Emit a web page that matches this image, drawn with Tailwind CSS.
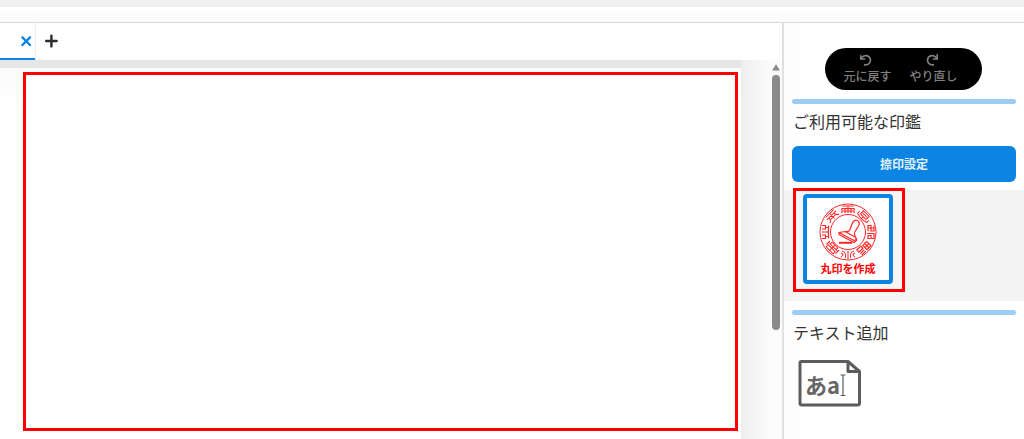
<!DOCTYPE html>
<html lang="ja">
<head>
    <meta charset="UTF-8">
    <meta name="viewport" content="width=device-width, initial-scale=1.0">
    <title>印鑑エディタ</title>
    <script src="https://cdn.jsdelivr.net/npm/@tailwindcss/browser@4"></script>
    <style>
        body {
            font-family: 'Noto Sans CJK JP', 'Noto Sans', sans-serif;
        }
    </style>
</head>
<body class="h-screen flex flex-col overflow-hidden bg-white text-[#333333]">
    <!-- Top bar -->
    <div class="h-[7px] shrink-0 bg-[#f0f0f0]"></div>
    <header class="h-4 shrink-0 bg-gradient-to-b from-white to-[#fafafa] border-b border-[#d9d9d9]"></header>

    <div class="flex flex-1 min-h-0">
        <!-- Editor -->
        <main class="flex flex-col flex-1 min-w-0 border-r-2 border-[#e0e0e0]">
            <!-- Tabs -->
            <nav class="flex h-[37px] shrink-0 bg-white">
                <div class="flex w-9 justify-end border-r border-[#eeeeee]">
                    <button aria-label="タブを閉じる" class="flex w-full items-center justify-end pr-[3px] border-b-2 border-[#0b84e3]">
                        <svg class="size-3" viewBox="0 0 12 12" fill="none" stroke="#0b84e3" stroke-width="2.4" stroke-linecap="round">
                            <path d="M2.4 2.4l7.6 7.6M10 2.4l-7.6 7.6" />
                        </svg>
                    </button>
                </div>
                <button aria-label="タブを追加" class="flex items-center px-2 pb-0.5">
                    <svg class="size-[14px]" viewBox="0 0 14 14" fill="none" stroke="#2b2b2b" stroke-width="2.4" stroke-linecap="round">
                        <path d="M7.4 1.6v10.8M2.2 7h10.4" />
                    </svg>
                </button>
            </nav>

            <!-- Canvas -->
            <div class="flex flex-1 min-h-0 bg-[#e6e6e6]">
                <div class="flex flex-1 min-w-0 pt-2">
                    <section class="flex flex-1 min-w-0 bg-gradient-to-b from-[#fafafa] to-white to-10% pl-[23px] pr-[3px] pt-1 pb-2">
                        <div class="flex-1 border-3 border-[#ff0000] bg-white"></div>
                    </section>
                </div>
                <div class="flex w-[41px] shrink-0 flex-col items-end bg-gradient-to-r from-[#eeeeee] to-[#fbfbfb] to-70% pt-1 pr-[2px]">
                    <svg class="w-2 h-[7px]" viewBox="0 0 8 7" fill="#8a8a8a">
                        <path d="M4 0.3L8 6.6H0z" />
                    </svg>
                    <div class="mt-1 w-2 h-[68%] rounded-full bg-[#8a8a8a]"></div>
                </div>
            </div>
        </main>

        <!-- Sidebar -->
        <aside class="w-60 shrink-0 bg-gradient-to-r from-[#fcfcfc] to-white to-10% pt-[25px]">
            <!-- Undo / redo -->
            <div class="ml-[41px] flex h-[42px] w-[157px] justify-center gap-[18px] rounded-full bg-black pr-1.5 text-xs font-medium text-[#808080]">
                <button class="flex flex-col items-center pt-1">
                    <svg class="size-4" viewBox="0 0 16 16" fill="none" stroke="currentColor" stroke-width="1.7">
                        <path d="M5 12.6A4.7 4.7 0 1 0 2.4 6.6" />
                        <path d="M1.8 3.2v3.8h4.4" />
                    </svg>
                    <span>元に戻す</span>
                </button>
                <button class="flex flex-col items-center pt-1">
                    <svg class="size-4" viewBox="0 0 16 16" fill="none" stroke="currentColor" stroke-width="1.7">
                        <path d="M8 12.6A4.7 4.7 0 1 1 10.6 6.6" />
                        <path d="M11.2 2.2v4.8H6.8" />
                    </svg>
                    <span>やり直し</span>
                </button>
            </div>

            <!-- Stamps -->
            <div class="mx-2 mt-[9px] h-[5px] rounded-full bg-[#9ccef5]"></div>
            <h2 class="mt-[5px] px-[9px] text-base">ご利用可能な印鑑</h2>
            <div class="px-2 pt-[13px]">
                <button class="h-9 w-full rounded-md bg-[#0b84e3] text-xs font-bold text-[#e3f2fd]">捺印設定</button>
            </div>
            <div class="relative mt-2 h-[111px] bg-[#f4f4f4] pl-[19px] pt-1">
                <button class="flex size-[90px] flex-col items-center rounded-sm border-4 border-[#0b84e3] bg-white pt-[5px]">
                    <svg class="size-[58px] shrink-0" viewBox="-29 -29 58 58" fill="none" stroke="#ff2626" stroke-width="1">
                        <circle r="28" />
                        <circle r="17.5" />
                        <g>
                            <path d="M-6 -26H6M0 -26V-19M-6 -19V-23.500H6V-19M-3 -23.500V-19M3 -23.500V-19M-5 -21H5" stroke-width="1.2" />
                        </g>
                        <g transform="rotate(45)">
                            <path d="M-4 -26H4V-21.500H-4zM-4 -23.800H4M-6.500 -23V-20Q-3 -19 0 -19Q3 -19 6.500 -20V-23M0 -21.500V-19" />
                        </g>
                        <g transform="rotate(90)">
                            <path d="M-6.500 -26H-1V-23H-6.500V-20H-1M-4 -26V-20M1.500 -19V-26H6.500V-23H3.500V-20H6.500V-22" stroke-width="1.2" />
                        </g>
                        <g transform="rotate(135)">
                            <path d="M-6.500 -26V-20H-1V-26zM-6.500 -23H-1M1 -26H6.500M1 -24H6.500M1 -22H6.500V-19H1zM-3.700 -26V-19" stroke-width="1.2" />
                        </g>
                        <g transform="rotate(180)">
                            <path d="M0 -27V-19M-2.500 -26V-22Q-3 -20 -6 -19M2.500 -26V-22Q3 -20 6 -19M-7 -25Q-5 -24.500 -5 -22L-7 -21M7 -25Q5 -24.500 5 -22L7 -21" />
                        </g>
                        <g transform="rotate(225)">
                            <path d="M-5 -26H5V-23H-5zM-6.500 -21H6.500M-4 -21V-18.500H4V-21M0 -26V-18.500M-6.500 -24V-19M6.500 -24V-19" />
                        </g>
                        <g transform="rotate(270)">
                            <path d="M-6.500 -19.500H6.500M0 -26V-19.500M-6.500 -26V-22.500H-3V-26M6.500 -26V-22.500H3V-26M-4.500 -22.500V-19.500M4.500 -22.500V-19.500" stroke-width="1.2" />
                        </g>
                        <g transform="rotate(315)">
                            <path d="M-5.500 -26H5.500M0 -26.500V-19M-6.500 -23.500H6.500M-3.500 -23.500Q-3.500 -20 -6.500 -19M3.500 -23.500Q3.500 -20 6.500 -19M-3.500 -21.200H3.500" />
                        </g>
                        <g stroke-width="1.2" stroke-linejoin="round">
                            <path d="M1.500 -1.500L4 -8Q6 -13 9.500 -11.500Q12.500 -9.500 10.500 -6L6.500 0.500" />
                            <path d="M1.500 -1.500Q0 0 -3 -0.500L-9 0.500L6 8.500Q8.500 8 8 6Q6 3 6.500 0.500" />
                            <path d="M-9 0.500V2.500L6 10.500L8.500 8.500V6M-3 -0.500L7 5" />
                            <path d="M-9 10.800H4" stroke-width="2" />
                        </g>
                    </svg>
                    <span class="pt-px text-[11px] leading-3 font-bold text-[#ff0000]">丸印を作成</span>
                </button>
                <div class="pointer-events-none absolute left-[9px] -top-0.5 h-26 w-28 border-3 border-[#ff0000]"></div>
            </div>

            <!-- Text -->
            <div class="mx-2 mt-[9px] h-[5px] rounded-full bg-[#9ccef5]"></div>
            <h2 class="mt-[5px] px-[9px] text-base">テキスト追加</h2>
            <button aria-label="テキストを追加" class="mt-[15px] ml-3.5 block">
                <svg class="w-16 h-12" viewBox="0 0 64 48" fill="none" stroke="#5c5c5c" stroke-width="3" stroke-linejoin="round">
                    <path d="M3.5 2.5H50L61.5 12.5V44Q61.5 46 59.5 46H4Q2 46 2 44V4Q2 2.5 3.5 2.5z" />
                    <path d="M50 2.5V12.5H61" />
                    <path d="M42.5 16h5M42.5 36.5h5M45 16V36.5" stroke-width="1.2" />
                    <text x="7" y="35" font-size="22" font-weight="700" fill="#666666" stroke="none">あa</text>
                </svg>
            </button>
        </aside>
    </div>
</body>
</html>
